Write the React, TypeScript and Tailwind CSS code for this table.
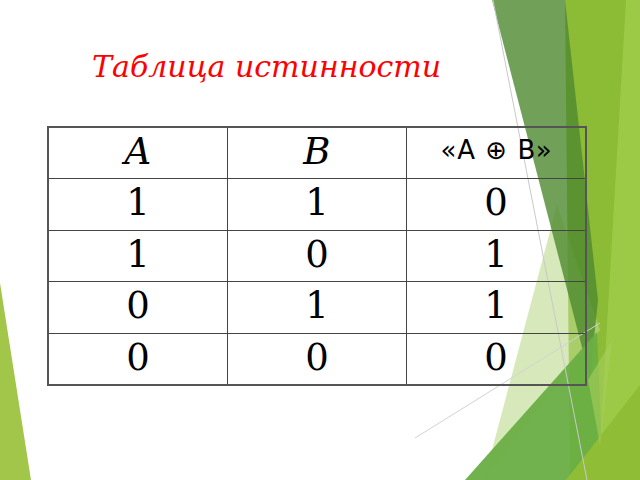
import React from 'react';

const rows = [
  ['1', '1', '0'],
  ['1', '0', '1'],
  ['0', '1', '1'],
  ['0', '0', '0'],
];

function Facets() {
  return (
    <svg className="absolute inset-0" width="640" height="480" viewBox="0 0 640 480">
      {/* left corner */}
      <polygon points="0,283 31,480 0,480" fill="#a1c64a" />
      {/* right side facets */}
      <polygon points="565,0 640,0 640,480 570,480" fill="#8cbb35" />
      <polygon points="626,0 640,0 640,480 598,480" fill="#9cca47" />
      <polygon points="557,205 600,330 484,480" fill="#bcd98c" fillOpacity="0.6" />
      <polygon points="492,0 565,0 598,300 590,378" fill="#4e8a2e" fillOpacity="0.8" />
      <polygon points="465,480 597,332 603,480" fill="#6aae45" fillOpacity="0.95" />
      <polygon points="640,385 640,480 566,480" fill="#8fbe36" />
      <polygon points="588,380 612,340 600,445" fill="#a6cf5c" fillOpacity="0.6" />
      <line x1="493" y1="0" x2="587" y2="480" stroke="#c9c9c9" strokeWidth="1" />
      <line x1="415" y1="438" x2="600" y2="323" stroke="#d2d2d2" strokeWidth="1" />
    </svg>
  );
}

export default function App() {
  return (
    <div className="relative w-[640px] h-[480px] bg-white overflow-hidden">
      <Facets />

      <div className="relative flex flex-col">
        {/* Title */}
        <h1 className="pt-[52px] pl-[92px] text-[30px] leading-none italic text-[#ff0000] font-['DejaVu_Serif',serif]">
          Таблица истинности
        </h1>

        {/* Truth table */}
        <table className="mt-[44px] ml-[47px] w-[540px] border-collapse border-2 border-[#555] font-['DejaVu_Serif',serif] text-black">
          <tbody>
            <tr>
              <td className="w-[180px] h-[51.5px] border border-[#444] align-top text-center pt-[5px] text-[37px] leading-none italic">A</td>
              <td className="w-[180px] h-[51.5px] border border-[#444] align-top text-center pt-[5px] text-[37px] leading-none italic">B</td>
              <td className="w-[180px] h-[51.5px] border border-[#444] align-top text-center pt-[9px] pl-[1px] text-[26px] leading-none tracking-[1px] font-['DejaVu_Sans',sans-serif] not-italic">
                «A ⊕ B»
              </td>
            </tr>
            {rows.map((r, i) => (
              <tr key={i}>
                {r.map((v, j) => (
                  <td key={j} className="w-[180px] h-[51.5px] border border-[#444] align-top text-center pt-[5px] text-[37px] leading-none">
                    {v}
                  </td>
                ))}
              </tr>
            ))}
          </tbody>
        </table>
      </div>
    </div>
  );
}
